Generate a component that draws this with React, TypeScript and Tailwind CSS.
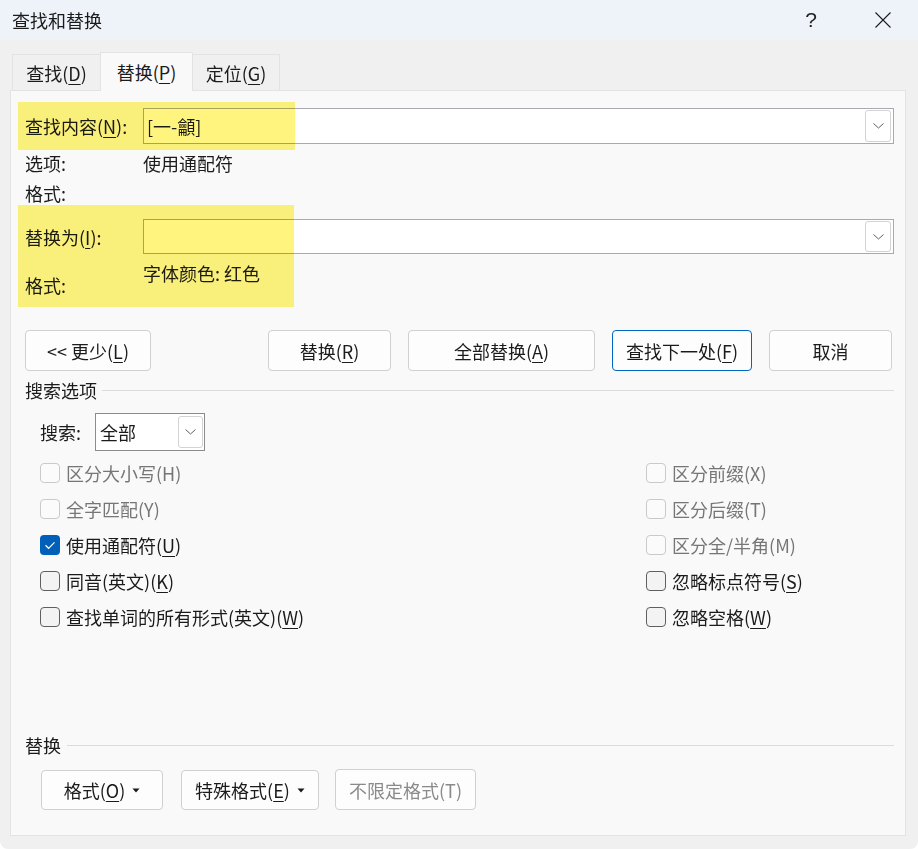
import React from "react";

const Acc = ({ children }: { children: React.ReactNode }) => (
  <span className="underline decoration-1 underline-offset-[3px]">{children}</span>
);

const Chevron = () => (
  <svg width="11" height="6" viewBox="0 0 11 6" fill="none">
    <path d="M0.5 0.5 L5.5 5 L10.5 0.5" stroke="#5f5f5f" strokeWidth="1" />
  </svg>
);

const Caret = () => (
  <svg width="8" height="5" viewBox="0 0 8 5" className="ml-[7px]">
    <path d="M0.5 0.5 H7.5 L4 4.5 Z" fill="#1b1b1b" />
  </svg>
);

function Combo({ value, h }: { value?: string; h: string }) {
  return (
    <div className={`flex-1 flex bg-white border border-[#a9a9b1] ${h}`}>
      <div className="flex-1 pl-[3px] flex items-center leading-[24px]">{value}</div>
      <div className="w-[26px] my-[1px] mr-[2px] border border-[#d3d3d3] rounded-[3px] bg-white flex items-center justify-center">
        <Chevron />
      </div>
    </div>
  );
}

function Btn({
  children,
  w,
  primary,
  disabled,
  h = "h-[41px]",
}: {
  children: React.ReactNode;
  w: string;
  primary?: boolean;
  disabled?: boolean;
  h?: string;
}) {
  return (
    <div
      className={`${w} ${h} rounded-[4px] border flex items-center justify-center bg-[#fdfdfd] ${
        primary ? "border-[#0067c0]" : "border-[#d0d0d0]"
      } ${disabled ? "text-[#8a8a8a]" : ""}`}
    >
      {children}
    </div>
  );
}

function Check({
  label,
  state,
}: {
  label: React.ReactNode;
  state: "disabled" | "on" | "off";
}) {
  return (
    <div className="h-[36px] flex items-center gap-[6px]">
      {state === "on" ? (
        <div className="w-[20px] h-[20px] rounded-[4px] bg-[#005fb8] flex items-center justify-center">
          <svg width="20" height="20" viewBox="0 0 20 20" fill="none">
            <path d="M5.5 10.3 L8.6 13.3 L14.5 7.4" stroke="white" strokeWidth="1.2" />
          </svg>
        </div>
      ) : state === "off" ? (
        <div className="w-[20px] h-[20px] rounded-[4px] border border-[#5f5f5f] bg-[#f3f3f3]" />
      ) : (
        <div className="w-[20px] h-[20px] rounded-[4px] border border-[#cacaca] bg-[#fbfbfb]" />
      )}
      <span className={state === "disabled" ? "text-[#767676]" : ""}>{label}</span>
    </div>
  );
}

export default function App() {
  return (
    <div className="w-[918px] h-[849px] bg-white">
      <div className="w-[918px] h-[849px] bg-[#f0f0f0] rounded-b-[8px] overflow-hidden flex flex-col text-[18px] leading-[24px] text-[#1b1b1b] font-['Noto_Sans_CJK_SC','Noto_Sans',sans-serif]">
        {/* title bar */}
        <div className="h-[40px] bg-[#eef2f9] flex items-center pl-[12px] shrink-0">
          <div className="flex-1">查找和替换</div>
          <span className="mr-[58px] text-[21px] font-light text-[#222] font-['Liberation_Sans',sans-serif]">?</span>
          <svg width="16" height="16" viewBox="0 0 16 16" className="mr-[27px]">
            <path d="M0.5 0.5 L15.5 15.5 M15.5 0.5 L0.5 15.5" stroke="#1b1b1b" strokeWidth="1.1" />
          </svg>
        </div>

        {/* tabs */}
        <div className="mt-[12px] h-[38px] pl-[12px] flex items-end shrink-0">
          <div className="w-[88px] h-[36px] border border-b-0 border-r-0 border-[#e3e3e3] bg-[#f0f0f0] flex items-center justify-center">
            查找(<Acc>D</Acc>)
          </div>
          <div className="relative z-10 w-[93px] h-[39px] -mb-px border border-b-0 border-[#e3e3e3] bg-[#f9f9f9] flex items-center justify-center">
            替换(<Acc>P</Acc>)
          </div>
          <div className="w-[87px] h-[36px] border border-b-0 border-l-0 border-[#e3e3e3] bg-[#f0f0f0] flex items-center justify-center">
            定位(<Acc>G</Acc>)
          </div>
        </div>

        {/* tab page */}
        <div className="relative ml-[10px] w-[896px] h-[746px] shrink-0 border border-[#e3e3e3] bg-[#f9f9f9] flex flex-col pl-[14px] pr-[11px] pb-[25px]">
          <div className="mt-[17px] h-[36px] flex">
            <div className="w-[118px] flex items-center">
              查找内容(<Acc>N</Acc>):
            </div>
            <Combo value="[一-龥]" h="h-[36px]" />
          </div>
          <div className="mt-[7px] h-[24px] flex">
            <div className="w-[118px]">选项:</div>
            <div>使用通配符</div>
          </div>
          <div className="mt-[6px] h-[24px] flex">
            <div className="w-[118px]">格式:</div>
          </div>
          <div className="mt-[14px] h-[35px] flex">
            <div className="w-[118px] flex items-center">
              替换为(<Acc>I</Acc>):
            </div>
            <Combo h="h-[35px]" />
          </div>
          <div className="mt-[7px] flex items-start">
            <div className="w-[118px] pt-[12px]">格式:</div>
            <div>字体颜色: 红色</div>
          </div>

          {/* command buttons */}
          <div className="mt-[33px] flex pr-[2px]">
            <Btn w="w-[126px]">
              &lt;&lt; 更少(<Acc>L</Acc>)
            </Btn>
            <div className="ml-auto flex gap-[17px]">
              <Btn w="w-[123px]">
                替换(<Acc>R</Acc>)
              </Btn>
              <Btn w="w-[187px]">
                全部替换(<Acc>A</Acc>)
              </Btn>
              <Btn w="w-[140px]" primary>
                查找下一处(<Acc>F</Acc>)
              </Btn>
              <Btn w="w-[123px]">取消</Btn>
            </div>
          </div>

          {/* search options */}
          <div className="mt-[7px] flex items-center">
            <span>搜索选项</span>
            <div className="flex-1 ml-[5px] h-px bg-[#dcdcdc]" />
          </div>
          <div className="mt-[11px] pl-[15px] flex items-center">
            <div className="w-[55px]">搜索:</div>
            <div className="w-[110px] h-[38px] flex bg-white border border-[#8c8c8c]">
              <div className="flex-1 pl-[4px] flex items-center">全部</div>
              <div className="w-[25px] my-[2px] mr-[1px] border border-[#d3d3d3] rounded-[3px] flex items-center justify-center">
                <Chevron />
              </div>
            </div>
          </div>
          <div className="mt-[4px] pl-[15px] grid grid-cols-[606px_1fr]">
            <div className="flex flex-col">
              <Check state="disabled" label="区分大小写(H)" />
              <Check state="disabled" label="全字匹配(Y)" />
              <Check state="on" label={<>使用通配符(<Acc>U</Acc>)</>} />
              <Check state="off" label={<>同音(英文)(<Acc>K</Acc>)</>} />
              <Check state="off" label={<>查找单词的所有形式(英文)(<Acc>W</Acc>)</>} />
            </div>
            <div className="flex flex-col">
              <Check state="disabled" label="区分前缀(X)" />
              <Check state="disabled" label="区分后缀(T)" />
              <Check state="disabled" label="区分全/半角(M)" />
              <Check state="off" label={<>忽略标点符号(<Acc>S</Acc>)</>} />
              <Check state="off" label={<>忽略空格(<Acc>W</Acc>)</>} />
            </div>
          </div>

          {/* replace section */}
          <div className="mt-auto flex items-center">
            <span>替换</span>
            <div className="flex-1 ml-[6px] h-px bg-[#dcdcdc]" />
          </div>
          <div className="mt-[12px] pl-[16px] flex items-end">
            <Btn w="w-[122px]" h="h-[40px]">
              格式(<Acc>O</Acc>)
              <Caret />
            </Btn>
            <div className="ml-[18px]">
              <Btn w="w-[138px]" h="h-[40px]">
                特殊格式(<Acc>E</Acc>)
                <Caret />
              </Btn>
            </div>
            <div className="ml-[16px]">
              <Btn w="w-[141px]" disabled>
                不限定格式(T)
              </Btn>
            </div>
          </div>

          {/* marker highlights laid over the find / replace fields */}
          <div className="absolute left-[7px] top-[11px] w-[277px] h-[48px] bg-[#fff57e] mix-blend-multiply pointer-events-none" />
          <div className="absolute left-[7px] top-[114px] w-[276px] h-[102px] bg-[#fff57e] mix-blend-multiply pointer-events-none" />
        </div>
      </div>
    </div>
  );
}
